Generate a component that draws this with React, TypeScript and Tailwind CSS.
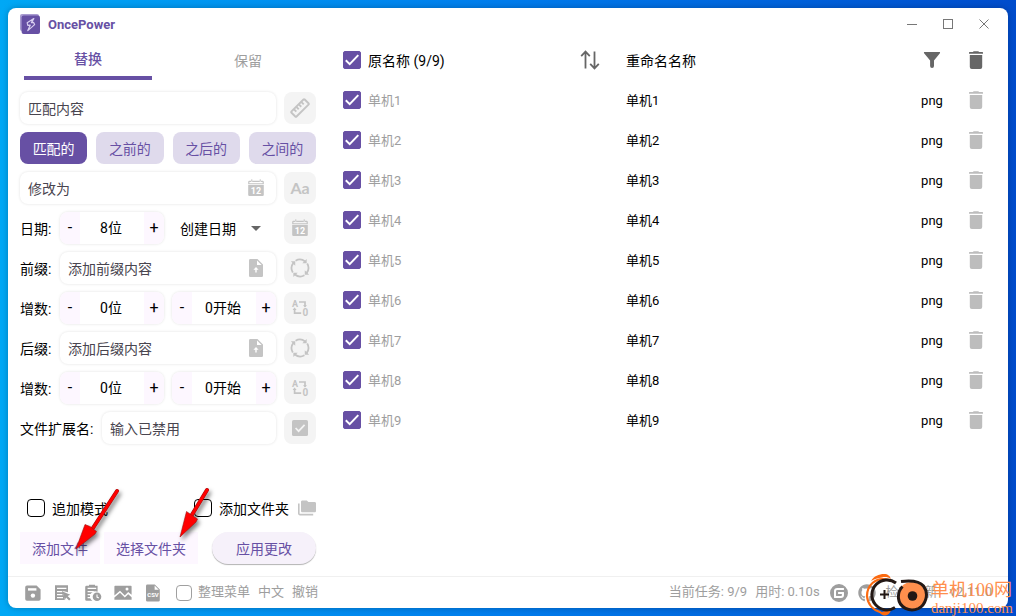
import { useState, type ReactNode } from 'react'
import clsx from 'clsx'
import { FaGithub } from 'react-icons/fa'
import { SiGitee } from 'react-icons/si'

const files = ['单机1', '单机2', '单机3', '单机4', '单机5', '单机6', '单机7', '单机8', '单机9']
const modes = ['匹配的', '之前的', '之后的', '之间的']

type IconProps = { size?: number; className?: string }

function Icon({ size = 18, className, children }: IconProps & { children: ReactNode }) {
    return (
        <svg width={size} height={size} viewBox="0 0 18 18" fill="currentColor" className={clsx('shrink-0', className)} aria-hidden="true">
            {children}
        </svg>
    )
}

function LogoIcon() {
    return (
        <svg width="20" height="20" viewBox="0 0 20 20" fill="none" aria-hidden="true">
            <path d="M2 0h15a2 2 0 0 1 2 2v15H2a2 2 0 0 1-2-2V2a2 2 0 0 1 2-2z" fill="#a99bd0" />
            <rect x="1.6" y="1.6" width="18.4" height="18.4" rx="2" fill="#6750a4" />
            <path d="M13.8 4.600 7.200 8.800l.6 2.600 2.400-.2-2.400 5.400 6.800-6-1-2.200-2.200.2z" stroke="#d9cff0" strokeWidth="1.2" strokeLinejoin="round" />
        </svg>
    )
}

function RulerIcon() {
    return (
        <Icon size={20}>
            <g transform="rotate(-45 9 9)" fill="none" stroke="currentColor" strokeWidth="1.7">
                <rect x=".6" y="5.800" width="16.8" height="6.400" rx=".8" />
                <path d="M4.300 5.600v3.400M7.400 5.600v3.400M10.600 5.600v3.400M13.700 5.600v3.400" />
            </g>
        </Icon>
    )
}

function CalendarIcon() {
    return (
        <Icon>
            <path d="M4 .4h1.400v2H4zM12.600.4H14v2h-1.400zM2.400 1.800h13.200a1.200 1.200 0 0 1 1.200 1.200v2.200H1.200V3a1.200 1.200 0 0 1 1.200-1.200zm0 1.100v1.300h13.200V2.900z" fillRule="evenodd" />
            <path d="M1.200 6h15.600v9.800a1.200 1.200 0 0 1-1.200 1.200H2.400a1.200 1.200 0 0 1-1.200-1.200z" />
            <text x="9" y="15" textAnchor="middle" fontSize="9" fontWeight="700" fill="#fff" fontFamily="Roboto, sans-serif">12</text>
        </Icon>
    )
}

function UploadIcon() {
    return (
        <Icon>
            <path d="M3.400 0H10.500l5.500 5.500v10.900a1.400 1.400 0 0 1-1.400 1.600H3.400A1.400 1.400 0 0 1 2 16.400V1.400A1.400 1.400 0 0 1 3.400 0z" />
            <path d="M10 1.400v4.600h4.600zM9 8l2.600 2.800H9.700v2.800H8.300v-2.800H6.400z" fill="#fff" />
        </Icon>
    )
}

function CycleIcon() {
    return (
        <Icon size={20}>
            <g fill="none" stroke="currentColor" strokeWidth="1.600">
                <path d="M5 2.500a7.600 7.600 0 0 1 8.600.6" />
                <path d="M15.500 5a7.600 7.600 0 0 1-.6 8.600" />
                <path d="M13 15.500a7.600 7.600 0 0 1-8.600-.6" />
                <path d="M2.500 13a7.600 7.600 0 0 1 .6-8.600" />
            </g>
            <path d="M15 .8v3.900h-3.900zM17.200 15h-3.900v-3.900zM3 17.200v-3.900h3.900zM.8 3h3.900v3.900z" />
        </Icon>
    )
}

function LetterSwapIcon() {
    return (
        <Icon>
            <text x="4" y="7.600" textAnchor="middle" fontSize="9" fontWeight="700" fontFamily="Roboto, sans-serif">A</text>
            <text x="14.400" y="17" textAnchor="middle" fontSize="10" fontWeight="700" fontFamily="Roboto, sans-serif">0</text>
            <path d="M8 3h6v4.400M3.600 9.800v4.400h6.600" fill="none" stroke="currentColor" strokeWidth="1.700" />
            <path d="M12 6.200h4l-2 2.400zM1.600 11h4l-2-2.400z" />
        </Icon>
    )
}

function CheckBoxIcon() {
    return (
        <Icon>
            <rect x="1" y="1" width="16" height="16" rx="1.600" />
            <path d="m4.600 9 3 3.200 6-6.400" fill="none" stroke="#f4f4f4" strokeWidth="1.700" />
        </Icon>
    )
}

function SortIcon() {
    return (
        <svg width="20" height="20" viewBox="0 0 20 20" fill="none" stroke="currentColor" strokeWidth="1.800" aria-hidden="true">
            <path d="M5.500 18.500V2M1.200 6.200 5.500 1.600l4.300 4.600M14.500 1.500V18M10.200 13.800l4.300 4.600 4.300-4.600" />
        </svg>
    )
}

function FilterIcon() {
    return (
        <Icon>
            <path d="M1.600 1h14.800c.7 0 .9.7.5 1.200L11 9.600V15a1.900 1.900 0 0 1-3.900 0V9.600L1.100 2.200C.7 1.700.9 1 1.600 1z" />
        </Icon>
    )
}

function TrashIcon() {
    return (
        <Icon>
            <path d="M6 .9 6.600.2h4.800l.6.7h3.400c.4 0 .6.3.6.6v1.200H2V1.500c0-.3.2-.6.6-.6zM2.800 4h12.400v12a2 2 0 0 1-2 2H4.800a2 2 0 0 1-2-2z" />
        </Icon>
    )
}

function FoldersIcon({ className }: IconProps) {
    return (
        <Icon className={className}>
            <path d="M4.400 1.400h4.400L10.400 3h6.200c.8 0 1.400.6 1.400 1.300v7.600c0 .8-.6 1.400-1.400 1.400H4.400c-.8 0-1.400-.6-1.400-1.400V2.800c0-.8.6-1.400 1.400-1.400z" />
            <path d="M.8 4.600v10c0 .6.4 1 1 1h13.400" fill="none" stroke="currentColor" strokeWidth="1.600" />
        </Icon>
    )
}

function SaveIcon() {
    return (
        <Icon>
            <path d="M3 1.400h9.600l4 4V15a1.800 1.800 0 0 1-1.800 1.800H3A1.800 1.800 0 0 1 1.200 15V3.200A1.800 1.800 0 0 1 3 1.400z" />
            <path d="M4 4.200h8.400v2.400H4z" fill="#fff" />
            <circle cx="8.900" cy="11.600" r="2.200" fill="#fff" />
        </Icon>
    )
}

function ListSelectIcon() {
    return (
        <Icon>
            <path d="M1 1.200h13v7L9 6.900l1.600 9H1z" />
            <path d="M3 4.400h9.400M3 7.600h5.400M3 10.600h5.400M3 13.600h6" fill="none" stroke="#fff" strokeWidth="1.200" />
            <path d="m8.600 7.600 7.600 3.100-2.600 1.400 3 3-1.500 1.500-3-3-1.300 2.600z" />
        </Icon>
    )
}

function ClipboardClockIcon() {
    return (
        <Icon>
            <path d="M5 1.800V.8h6v1h2.600v6A5.200 5.200 0 0 0 8.400 16.800H2.600A1.400 1.400 0 0 1 1.200 15.400V3.200a1.400 1.400 0 0 1 1.400-1.400z" />
            <path d="M3.600 4.400h8.600M3.600 7.600h6.200M3.600 10.600h3.800M3.600 13.600h3.400" fill="none" stroke="#fff" strokeWidth="1.200" />
            <circle cx="13" cy="12.800" r="4.300" />
            <path d="M13 10.400v2.700l1.800 1" fill="none" stroke="#fff" strokeWidth="1.100" />
        </Icon>
    )
}

function PhotoIcon() {
    return (
        <Icon>
            <path d="M1.200 1.800h15.600c.5 0 .8.4.8.8v8.200L14.200 8l-3.400 3.400L6 6.800.4 11.600v-9c0-.4.3-.8.8-.8z" />
            <circle cx="13" cy="4.900" r="1.500" fill="#fff" />
            <path d="M6 8.800l4.800 4.600 3.400-3.200 3.400 3v2.600H.4v-2.400z" />
        </Icon>
    )
}

function CsvIcon() {
    return (
        <Icon>
            <path d="M3.400.6h7.400l5 5v10.600a1.400 1.400 0 0 1-1.400 1.400H3.400A1.400 1.400 0 0 1 2 16.200V2A1.400 1.400 0 0 1 3.400.6z" />
            <path d="M10.600 1.600v4.200h4.200z" fill="#fff" />
            <text x="9" y="13" textAnchor="middle" fontSize="6" fontWeight="700" fill="#fff" fontFamily="Roboto, sans-serif">CSV</text>
        </Icon>
    )
}

type CheckProps = { id: string; label?: string; small?: boolean; light?: boolean; defaultChecked?: boolean }

function Check({ id, label, small, light, defaultChecked }: CheckProps) {
    return (
        <span className={clsx('grid shrink-0 place-items-center', small ? 'size-4' : 'size-[18px]')}>
            <input
                id={id}
                type="checkbox"
                aria-label={label}
                defaultChecked={defaultChecked}
                className={clsx(
                    'peer col-start-1 row-start-1 size-full appearance-none rounded border checked:rounded-xs checked:border-[#6750a4] checked:bg-[#6750a4]',
                    light ? 'border-[#a0a0a0]' : 'border-black'
                )}
            />
            <svg viewBox="0 0 18 18" fill="none" stroke="#fff" strokeWidth="2" className="pointer-events-none invisible col-start-1 row-start-1 size-full peer-checked:visible" aria-hidden="true">
                <path d="m2.800 9.200 3.900 3.900 8.600-9" />
            </svg>
        </span>
    )
}

function Field({ id, placeholder, children, disabled }: { id: string; placeholder: string; children?: ReactNode; disabled?: boolean }) {
    return (
        <div className="flex h-8 min-w-0 flex-1 items-center rounded-lg bg-white pr-[11px] pl-2 shadow-[0_0_3px_rgba(0,0,0,0.12)]">
            <input id={id} aria-label={placeholder} placeholder={placeholder} disabled={disabled} className="h-8 min-w-0 flex-1 bg-transparent pt-0.5 text-sm outline-none placeholder:text-[#49454f]" />
            {children && <span className="text-[#c4c4c4]">{children}</span>}
        </div>
    )
}

function ToolButton({ label, children }: { label: string; children: ReactNode }) {
    return (
        <button aria-label={label} className="flex size-8 shrink-0 items-center justify-center rounded-lg bg-[#f4f4f4] text-[#c4c4c4]">
            {children}
        </button>
    )
}

function Stepper({ unit, initial }: { unit: string; initial: number }) {
    const [value, setValue] = useState(initial)

    return (
        <div className="flex h-8 flex-1 overflow-hidden rounded-lg bg-white text-sm shadow-[0_0_3px_rgba(0,0,0,0.12)]">
            <button aria-label="减少" onClick={() => setValue(Math.max(0, value - 1))} className="w-5 bg-[#fdf7ff] text-base">-</button>
            <span className="flex flex-1 items-center justify-center pr-0.5">{value}{unit}</span>
            <button aria-label="增加" onClick={() => setValue(value + 1)} className="w-5 bg-[#fdf7ff] text-base">+</button>
        </div>
    )
}

function Row({ label, htmlFor, wide, children }: { label: string; htmlFor?: string; wide?: boolean; children: ReactNode }) {
    return (
        <div className="flex items-center">
            <label htmlFor={htmlFor} className={clsx('shrink-0 pt-0.5', wide ? 'w-[82px]' : 'w-10')}>{label}</label>
            <div className="flex min-w-0 flex-1 gap-2">{children}</div>
        </div>
    )
}

function TitleBar() {
    return (
        <header className="flex h-8 items-center pr-1.5 pl-3">
            <LogoIcon />
            <h1 className="ml-2 flex-1 pt-0.5 text-[13px] font-bold text-[#6750a4]">OncePower</h1>
            <div className="flex text-[#777]">
                <button aria-label="最小化" className="flex h-8 w-9 items-center justify-center">
                    <svg width="10" height="10" stroke="currentColor" aria-hidden="true"><path d="M0 5.500h10" /></svg>
                </button>
                <button aria-label="最大化" className="flex h-8 w-9 items-center justify-center">
                    <svg width="10" height="10" fill="none" stroke="currentColor" aria-hidden="true"><rect x=".5" y=".5" width="9" height="9" /></svg>
                </button>
                <button aria-label="关闭" className="flex h-8 w-9 items-center justify-center">
                    <svg width="10" height="10" stroke="currentColor" aria-hidden="true"><path d="m.5.5 9 9M9.500.5l-9 9" /></svg>
                </button>
            </div>
        </header>
    )
}

// hand-drawn style pointers over the two "add" buttons
function Pointers() {
    return (
        <svg width="160" height="76" viewBox="0 0 160 76" className="pointer-events-none absolute -top-2 left-[54px] drop-shadow-[2px_3px_2px_rgba(0,0,0,0.5)]" aria-hidden="true">
            <g fill="none" strokeLinecap="round">
                <path d="M43 7 19 44M133 6l-17 28" stroke="#a01010" strokeWidth="4" />
                <path d="M43 7 19 44M133 6l-17 28" stroke="#f00" strokeWidth="3" />
            </g>
            <path d="M2 65 11 40.500l5 2 6.500 5L21 50zM106 53l6.500-25.500 5 3.500 6 4-1.500 3z" fill="#f00" stroke="#a01010" strokeWidth=".6" />
        </svg>
    )
}

function RulePanel() {
    const [mode, setMode] = useState(modes[0])

    return (
        <aside className="flex w-80 shrink-0 flex-col">
            <nav className="grid grid-cols-2 px-4">
                <button className="mr-4 h-10 border-b-4 border-[#6750a4] pt-0.5 text-sm font-medium text-[#6750a4]">替换</button>
                <button className="ml-4 h-10 pt-0.5 text-sm text-[#9e9e9e]">保留</button>
            </nav>
            <div className="flex flex-1 flex-col gap-2 px-3 pt-3">
                <div className="flex gap-2">
                    <Field id="match" placeholder="匹配内容" />
                    <ToolButton label="匹配长度"><RulerIcon /></ToolButton>
                </div>
                <div className="grid grid-cols-4 gap-[9px]">
                    {modes.map((item) => (
                        <button
                            key={item}
                            onClick={() => setMode(item)}
                            className={clsx('h-8 rounded-lg pt-0.5', item === mode ? 'bg-[#6750a4] text-white' : 'bg-[#dfdaec] text-[#6750a4]')}
                        >
                            {item}
                        </button>
                    ))}
                </div>
                <div className="flex gap-2">
                    <Field id="modify" placeholder="修改为"><CalendarIcon /></Field>
                    <ToolButton label="大小写"><span className="font-[Lato] text-base font-bold">Aa</span></ToolButton>
                </div>
                <Row label="日期:" htmlFor="date-type">
                    <Stepper unit="位" initial={8} />
                    <div className="flex h-8 flex-1 items-center">
                        <select id="date-type" className="h-8 min-w-0 flex-1 appearance-none bg-transparent pt-0.5 pl-2 text-sm">
                            <option>创建日期</option>
                            <option>修改日期</option>
                        </select>
                        <svg width="10" height="5" viewBox="0 0 10 5" className="mr-[15px] shrink-0 text-[#666]" fill="currentColor" aria-hidden="true"><path d="M0 0h10L5 5z" /></svg>
                    </div>
                    <ToolButton label="使用日期"><CalendarIcon /></ToolButton>
                </Row>
                <Row label="前缀:" htmlFor="prefix">
                    <Field id="prefix" placeholder="添加前缀内容"><UploadIcon /></Field>
                    <ToolButton label="循环前缀"><CycleIcon /></ToolButton>
                </Row>
                <Row label="增数:">
                    <Stepper unit="位" initial={0} />
                    <Stepper unit="开始" initial={0} />
                    <ToolButton label="交换前缀"><LetterSwapIcon /></ToolButton>
                </Row>
                <Row label="后缀:" htmlFor="suffix">
                    <Field id="suffix" placeholder="添加后缀内容"><UploadIcon /></Field>
                    <ToolButton label="循环后缀"><CycleIcon /></ToolButton>
                </Row>
                <Row label="增数:">
                    <Stepper unit="位" initial={0} />
                    <Stepper unit="开始" initial={0} />
                    <ToolButton label="交换后缀"><LetterSwapIcon /></ToolButton>
                </Row>
                <Row label="文件扩展名:" htmlFor="ext" wide>
                    <Field id="ext" placeholder="输入已禁用" disabled />
                    <ToolButton label="启用扩展名"><CheckBoxIcon /></ToolButton>
                </Row>

                <div className="relative mt-auto pb-3">
                    <div className="flex h-8 items-center pl-[7px]">
                        <Check id="append" />
                        <label htmlFor="append" className="ml-[7px] pt-0.5">追加模式</label>
                        <span className="flex-1" />
                        <Check id="folder" />
                        <label htmlFor="folder" className="ml-[7px] pt-0.5">添加文件夹</label>
                        <FoldersIcon className="ml-[9px] text-[#c4c4c4]" />
                    </div>
                    <div className="mt-2 flex gap-1 text-[#6750a4]">
                        <button className="h-8 bg-[#fdf7ff] px-3 pt-0.5">添加文件</button>
                        <button className="h-8 bg-[#fdf7ff] px-3 pt-0.5">选择文件夹</button>
                        <button className="ml-auto h-8 w-[104px] rounded-full bg-[#f6f1fa] pt-0.5 shadow-[0_1px_1px_rgba(0,0,0,0.3)]">应用更改</button>
                    </div>
                    <Pointers />
                </div>
            </div>
        </aside>
    )
}

function FileTable() {
    return (
        <main className="min-w-0 flex-1 pr-2">
            <table className="w-full table-fixed text-left">
                <thead>
                    <tr className="h-10">
                        <th className="p-0 pl-[15px] font-normal">
                            <div className="flex items-center justify-between pr-5">
                                <span className="flex items-center gap-[7px]">
                                    <Check id="all" defaultChecked />
                                    <label htmlFor="all" className="pt-0.5">原名称 (9/9)</label>
                                </span>
                                <button aria-label="排序" className="text-[#666]"><SortIcon /></button>
                            </div>
                        </th>
                        <th className="p-0 pt-0.5 pl-1.5 font-normal">重命名名称</th>
                        <th className="w-10 p-0">
                            <button aria-label="筛选" className="flex w-full justify-center text-[#666]"><FilterIcon /></button>
                        </th>
                        <th className="w-12 p-0">
                            <button aria-label="清空" className="flex w-full justify-center text-[#666]"><TrashIcon /></button>
                        </th>
                    </tr>
                </thead>
                <tbody className="text-[13px]">
                    {files.map((name) => (
                        <tr key={name} className="h-10">
                            <td className="p-0 pl-[15px]">
                                <div className="flex items-center gap-[7px]">
                                    <Check id={name} defaultChecked />
                                    <label htmlFor={name} className="pt-0.5 text-[#9e9e9e]">{name}</label>
                                </div>
                            </td>
                            <td className="p-0 pt-0.5 pl-1.5">{name}</td>
                            <td className="p-0 pt-0.5 text-center">png</td>
                            <td className="p-0">
                                <button aria-label={`删除${name}`} className="flex w-full justify-center text-[#bdbdbd]"><TrashIcon /></button>
                            </td>
                        </tr>
                    ))}
                </tbody>
            </table>
        </main>
    )
}

function StatusBar() {
    return (
        <footer className="flex h-8 items-center justify-between border-t border-[#f0f0f0] px-4 text-[13px] text-[#9e9e9e]">
            <div className="flex items-center">
                <div className="flex gap-3">
                    <button aria-label="保存配置"><SaveIcon /></button>
                    <button aria-label="日志"><ListSelectIcon /></button>
                    <button aria-label="历史"><ClipboardClockIcon /></button>
                    <button aria-label="图片预览"><PhotoIcon /></button>
                    <button aria-label="导入 CSV"><CsvIcon /></button>
                </div>
                <span className="mr-2 ml-[14px] flex items-center gap-1.5">
                    <Check id="menu" small light />
                    <label htmlFor="menu">整理菜单</label>
                </span>
                <button className="mr-2">中文</button>
                <button>撤销</button>
            </div>
            <div className="flex items-center gap-2">
                <span>当前任务: 9/9</span>
                <span>用时: 0.10s</span>
                <a href="#gitee" aria-label="Gitee" className="ml-0.5"><SiGitee size={18} /></a>
                <a href="#github" aria-label="GitHub" className="ml-0.5"><FaGithub size={18} /></a>
                <button className="ml-0.5">检查更新</button>
                <span className="ml-1">v2.11.0</span>
            </div>
        </footer>
    )
}

function Watermark() {
    return (
        <div className="pointer-events-none absolute right-[3px] bottom-0 flex items-end gap-0.5">
            <svg width="64" height="44" viewBox="0 0 64 44" fill="none" aria-hidden="true">
                <path d="M24 8C10 4 2 14 2 24c.5 8 6 14 14 16.500" stroke="#fb6a10" strokeWidth="2.200" />
                <path d="M6 9c3-5 8-7 13-7 4 0 6 2 7 5-3-2-6-2.500-9-1.500-4 .8-8 1.500-11 3.500zM13 39c3 1.500 6 1 8-.5 2-1 4-1 5-.5-1 3-3 5.500-6 5.500-3 0-5-2-7-4.500z" fill="#fb6a10" />
                <path d="M31 11A15 15 0 1 0 30 35.500" stroke="#231815" strokeWidth="3" />
                <path d="M15 22.500h9M19.500 18v9" stroke="#231815" strokeWidth="2" />
                <circle cx="47" cy="24" r="14" fill="#ff8f4d" />
                <path d="M36 9.500c8-1 18-1 22.500 4.500 6 8 2 19-5 22.500-9 4-19-1-20-10-.5-5 1-9 4-12" stroke="#231815" strokeWidth="3" />
                <circle cx="47.500" cy="24" r="4.800" fill="#231815" />
            </svg>
            <div className="font-['Liberation_Serif','Noto_Sans_CJK_SC',serif] text-[#ff8f4d]">
                <p className="text-[18px] leading-5">单机100网</p>
                <p className="text-[15px] leading-4">danji100.com</p>
            </div>
        </div>
    )
}

export default function App() {
    return (
        <div className="relative flex min-h-screen flex-col bg-linear-to-r from-[#00a8f5] via-[#007cec] via-50% to-[#004ccc] p-2 font-[Roboto,'Noto_Sans_CJK_SC',sans-serif] text-sm text-black">
            <div className="flex flex-1 flex-col rounded-lg bg-white shadow-[0_0_6px_rgba(0,0,0,0.25)]">
                <TitleBar />
                <div className="flex flex-1">
                    <RulePanel />
                    <FileTable />
                </div>
                <StatusBar />
            </div>
            <Watermark />
        </div>
    )
}
